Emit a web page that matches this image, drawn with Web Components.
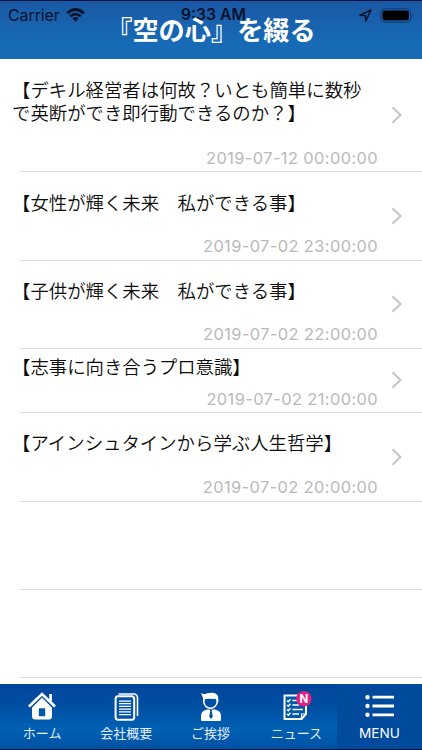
<!DOCTYPE html>
<html lang="ja">
<head>
<meta charset="utf-8">
<title>『空の心』を綴る</title>
<style>
html, body{
  margin: 0;
  height: 100%;
  overflow: hidden;
  background: #fff;
  font-family: Inter, "Noto Sans CJK JP", sans-serif;
}
</style>
</head>
<body>
<blog-app>
  <status-bar slot="header"></status-bar>
  <page-header slot="header">『空の心』を綴る</page-header>
  <post-row style="--h:113px;--top:19px;--end:3px" date="2019-07-12 00:00:00">【デキル経営者は何故？いとも簡単に数秒で英断ができ即行動できるのか？】</post-row>
  <post-row style="--h:89px;--top:19px;--end:4px" date="2019-07-02 23:00:00">【女性が輝く未来　私ができる事】</post-row>
  <post-row style="--h:88px;--top:18px;--end:4px" date="2019-07-02 22:00:00">【子供が輝く未来　私ができる事】</post-row>
  <post-row style="--h:64px;--top:6px;--end:3px" date="2019-07-02 21:00:00">【志事に向き合うプロ意識】</post-row>
  <post-row style="--h:89px;--top:18px;--end:4px" date="2019-07-02 20:00:00">【アインシュタインから学ぶ人生哲学】</post-row>
  <post-row style="--h:88px"></post-row>
  <post-row style="--h:88px"></post-row>
  <tab-bar slot="footer">
    <tab-item icon="home">ホーム</tab-item>
    <tab-item icon="company">会社概要</tab-item>
    <tab-item icon="person">ご挨拶</tab-item>
    <tab-item icon="news">ニュース</tab-item>
    <tab-item icon="menu" active>MENU</tab-item>
  </tab-bar>
</blog-app>

<script>
function template(html){
  const t = document.createElement('template');
  t.innerHTML = html;
  return t;
}

const app_template = template(`
<style>
:host{
  display: flex;
  flex-direction: column;
  height: 100vh;
}
header{
  display: grid;
  flex: none;
  height: 59px;
  box-sizing: border-box;
  border-top: 1px solid #07123f;
  background: linear-gradient(#1a58a5, #176bb6 75%, #1769b3);
}
header ::slotted(*){
  grid-area: 1 / 1;
}
main{
  flex: 1;
  min-height: 0;
  overflow: hidden;
}
</style>
<header><slot name="header"></slot></header>
<main><slot></slot></main>
<slot name="footer"></slot>`);

const status_template = template(`
<style>
:host{
  display: grid;
  grid-template-columns: 1fr auto 1fr;
  align-items: center;
  height: 28px;
  padding: 0 7px 0 8px;
  color: #06122b;
  font-size: 16px;
  line-height: 28px;
}
div{
  display: flex;
  align-items: center;
}
.left{ gap: 6px; letter-spacing: -.1px; }
.time{ font-weight: 600; font-size: 15.7px; padding-left: 4px; }
.right{ justify-content: flex-end; gap: 8px; }
svg{ display: block; }
</style>
<div class="left"><span>Carrier</span>
  <svg width="19" height="14" viewBox="0 0 19 14" fill="none" stroke="#06122b" stroke-width="2.7">
    <path d="M1.2 5.2Q9.5 -2.2 17.8 5.2M4.2 8.3Q9.5 3.8 14.8 8.3"/>
    <path d="M6.3 10.3Q9.5 7.8 12.7 10.3L9.5 13.5Z" fill="#06122b" stroke="none"/>
  </svg>
</div>
<span class="time">9:33 AM</span>
<div class="right">
  <svg width="13" height="13" viewBox="0 0 13 13" fill="none" stroke="#06122b" stroke-width="1.6" stroke-linejoin="round">
    <path d="M12 1L1 6.2L6.3 6.7L6.8 12Z"/>
  </svg>
  <svg width="35" height="15" viewBox="0 0 35 15">
    <rect x=".7" y=".7" width="30" height="13.4" rx="4" fill="none" stroke="#123d75" stroke-width="1.1"/>
    <rect x="2.5" y="2.5" width="26.4" height="9.8" rx="2.2" fill="#000"/>
    <path d="M32.2 5Q34.4 7.4 32.2 9.8Z" fill="#123d75"/>
  </svg>
</div>`);

const header_template = template(`
<style>
:host{
  display: block;
  text-align: center;
  color: #fff;
  font: 700 26.2px/56px "Noto Sans CJK JP", sans-serif;
  white-space: nowrap;
}
</style>
<slot></slot>`);

const row_template = template(`
<style>
:host{
  display: grid;
  grid-template-columns: 1fr 12px;
  column-gap: 12px;
  align-items: center;
  position: relative;
  box-sizing: border-box;
  height: var(--h);
  padding: 0 19px 0 12px;
}
.body{
  display: flex;
  flex-direction: column;
  justify-content: space-between;
  height: 100%;
  box-sizing: border-box;
  padding: var(--top) 0 var(--end);
}
.title{
  font: 350 18.4px/23px "Noto Sans CJK JP", sans-serif;
  color: #0c0c0c;
  width: 352px;
}
time{
  padding-right: 1px;
  font-size: 16.4px;
  line-height: 22px;
  letter-spacing: .4px;
  text-align: right;
  color: #b9b9bb;
}
svg{
  display: block;
  padding-bottom: 2px;
}
hr{
  position: absolute;
  left: 20px;
  right: 0;
  bottom: 0;
  margin: 0;
  border: 0;
  border-top: 1px solid #dcdcde;
}
</style>
<div class="body"><div class="title"><slot></slot></div><time></time></div>
<svg width="12" height="18" viewBox="0 0 12 18" fill="none" stroke="#c5c5ca" stroke-width="2.1"><path d="M1.5 1.2L9.5 9L1.5 16.8"/></svg>
<hr>`);

const bar_template = template(`
<style>
:host{
  display: grid;
  grid-template-columns: repeat(4, 1fr) 85px;
  flex: none;
  height: 66px;
  box-sizing: border-box;
  border-bottom: 1px solid #04102e;
  background: #00469a;
}
</style>
<slot></slot>`);

const item_template = template(`
<style>
:host{
  display: flex;
  flex-direction: column;
  align-items: center;
  box-sizing: border-box;
  padding-top: 6px;
  color: #e5effa;
  background: linear-gradient(#00469a, #004da2 30%, #0060b3 68%, #0052a5);
}
:host([active]){
  background: #004a9e;
  color: #fff;
}
:host([icon="news"]){
  padding-left: 3px;
}
svg{ display: block; }
span{
  font: 13px/18px "Noto Sans CJK JP", sans-serif;
  margin-top: 2px;
  white-space: nowrap;
}
:host([active]) span{
  font: 13.6px/18px Inter, sans-serif;
}
</style>
<svg width="34" height="32" viewBox="0 0 34 32"></svg>
<span><slot></slot></span>`);

const icons = {
  home: `<path d="M17 7L27 17.5V26Q27 29.5 24 29.5H10Q7 29.5 7 26V17.5Z" fill="#fff"/>
    <path d="M4 16.5L17 4L30 16.5M25.6 11V4" fill="none" stroke="#fff" stroke-width="2.7"/>
    <path d="M6 18L17 7.3L28 18" fill="none" stroke="#0053a8" stroke-width="1"/>
    <rect x="13.8" y="18.2" width="6.4" height="8" rx=".5" fill="#0057aa"/>`,
  company: `<path d="M9.5 4H24.5Q28.5 4 28.5 8V26" fill="none" stroke="#fff" stroke-width="1.6"/>
    <rect x="6.6" y="6.3" width="18.6" height="23.4" rx="2.5" fill="#0053a7" stroke="#fff" stroke-width="2"/>
    <path d="M10 11H22M10 13.7H22M10 16.4H22M10 19.1H22M10 21.8H22M10 24.5H22" stroke="#fff" stroke-width="1.25"/>`,
  person: `<circle cx="16.5" cy="11.5" r="6.7" fill="#0051a5" stroke="#fff" stroke-width="1.5"/>
    <path d="M9.2 13Q8.8 10 9 8L7 3Q10 5 13 3.2Q24.3 1 24.3 8.5V13L22.5 9L16.5 8.8L10.7 9Z" fill="#fff"/>
    <path d="M7 30V25.5Q7 21 13 19.5H21Q27 21 27 25.5V30Q27 31 26 31H8Q7 31 7 30Z" fill="#fff"/>
    <path d="M15.6 19.5H18.4L17.7 21.3L18.8 26.5L17 29L15.2 26.5L16.3 21.3Z" fill="#004d9c"/>`,
  news: `<path d="M5.5 5.5H27V24L22.5 29H5.5Z" fill="#0058ab" stroke="#fff" stroke-width="2" stroke-linejoin="round"/>
    <path d="M27 24H22.5V28.5" fill="none" stroke="#fff" stroke-width="1.2"/>
    <path d="M8 10.5L9.3 11.7L11.5 9.3M8 15L9.3 16.2L11.5 13.8M8 19.5L9.3 20.7L11.5 18.3M8 24L9.3 25.2L11.5 22.8M13.4 10.5H19M13.4 15H20M13.4 19.5H24M13.4 24H20" fill="none" stroke="#fff" stroke-width="1.5"/>
    <circle cx="24.8" cy="8.8" r="7.7" fill="#e52082"/>
    <text x="24.8" y="12.8" text-anchor="middle" font-family="Inter, sans-serif" font-size="11.5" font-weight="700" fill="#fff">N</text>`,
  menu: `<path d="M9.5 7.2H31M9.5 16H31M9.5 24.8H31" stroke="#fff" stroke-width="2.8"/>
    <g fill="#fff"><circle cx="4.5" cy="7.2" r="2.2"/><circle cx="4.5" cy="16" r="2.2"/><circle cx="4.5" cy="24.8" r="2.2"/></g>`
};

// Base for all elements, clones its template into an open shadow root
class BaseElement extends HTMLElement{
  constructor(tpl){
    super();
    this.attachShadow({mode:"open"});
    this.shadowRoot.appendChild(tpl.content.cloneNode(true));
  }
}

class BlogApp extends BaseElement{
  constructor(){ super(app_template); }
}

class StatusBar extends BaseElement{
  constructor(){ super(status_template); }
}

class PageHeader extends BaseElement{
  constructor(){ super(header_template); }
}

class PostRow extends BaseElement{
  constructor(){ super(row_template); }
  connectedCallback(){
    const date = this.getAttribute("date");
    if(date){
      this.shadowRoot.querySelector("time").textContent = date;
    }
    else{
      this.shadowRoot.querySelector(".body").remove();
      this.shadowRoot.querySelector("svg").remove();
    }
  }
}

class TabBar extends BaseElement{
  constructor(){ super(bar_template); }
}

class TabItem extends BaseElement{
  constructor(){ super(item_template); }
  connectedCallback(){
    this.shadowRoot.querySelector("svg").innerHTML = icons[this.getAttribute("icon")];
  }
}

customElements.define("blog-app", BlogApp);
customElements.define("status-bar", StatusBar);
customElements.define("page-header", PageHeader);
customElements.define("post-row", PostRow);
customElements.define("tab-bar", TabBar);
customElements.define("tab-item", TabItem);
</script>
</body>
</html>
